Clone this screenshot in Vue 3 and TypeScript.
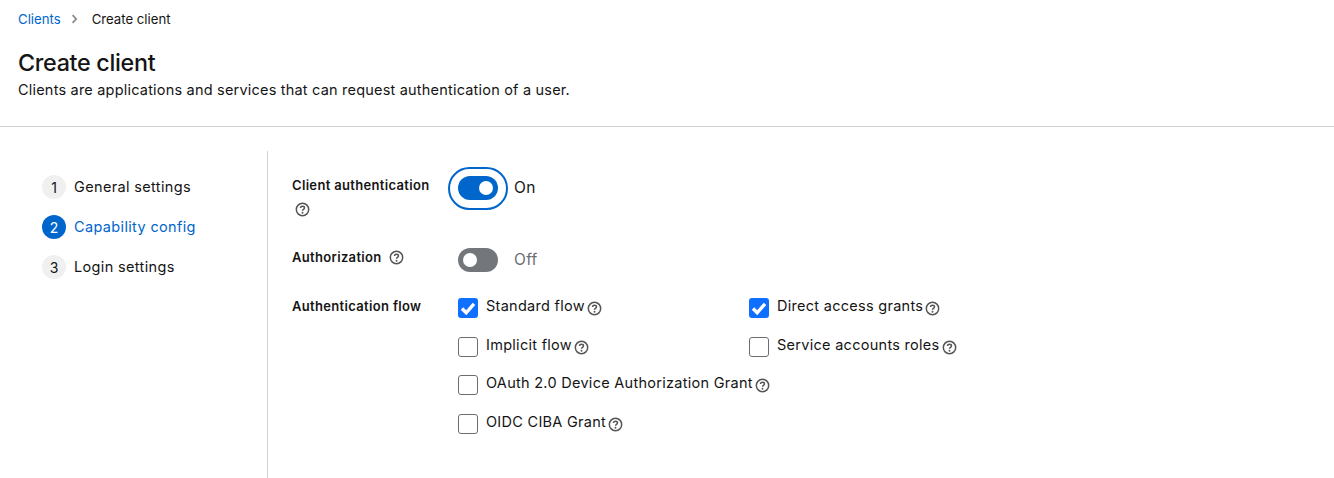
<script setup lang="ts">
const steps = [
  { n: 1, label: 'General settings', active: false },
  { n: 2, label: 'Capability config', active: true },
  { n: 3, label: 'Login settings', active: false },
]
const rows = [
  [{ label: 'Standard flow', on: true }, { label: 'Direct access grants', on: true }],
  [{ label: 'Implicit flow', on: false }, { label: 'Service accounts roles', on: false }],
  [{ label: 'OAuth 2.0 Device Authorization Grant', on: false }],
  [{ label: 'OIDC CIBA Grant', on: false }],
]
</script>

<template>
  <div class="page">
    <header class="head">
      <nav class="crumbs">
        <a class="link">Clients</a>
        <svg class="chev" viewBox="0 0 8 12"><path d="M1.7 1.3 6 6l-4.300 4.700" fill="none" stroke="#8a8d90" stroke-width="2.200"/></svg>
        <span>Create client</span>
      </nav>
      <h1>Create client</h1>
      <p>Clients are applications and services that can request authentication of a user.</p>
    </header>
    <div class="body">
      <ol class="steps">
        <li v-for="s in steps" :key="s.n" class="step" :class="{ active: s.active }">
          <span class="num">{{ s.n }}</span>
          <span class="step-label">{{ s.label }}</span>
        </li>
      </ol>
      <form class="form">
        <div class="row row-auth">
          <div class="lab lab-wrap">
            <b>Client authentication</b>
            <svg class="help help-below" viewBox="0 0 16 16"><circle cx="8" cy="8" r="6.600" fill="none" stroke="#555" stroke-width="1.600"/><path d="M5.900 6.400c0-1.200 1-1.900 2.100-1.900s2.100.7 2.100 1.800c0 1.500-2.100 1.500-2.100 3" fill="none" stroke="#555" stroke-width="1.600"/><circle cx="8" cy="11.400" r="1" fill="#555"/></svg>
          </div>
          <div class="switch-line">
            <span class="focus"><span class="switch on"><i></i></span></span>
            <span class="on-text">On</span>
          </div>
        </div>
        <div class="row row-authz">
          <div class="lab">
            <b>Authorization</b>
            <svg class="help help-side" viewBox="0 0 16 16"><circle cx="8" cy="8" r="6.600" fill="none" stroke="#555" stroke-width="1.600"/><path d="M5.900 6.400c0-1.200 1-1.900 2.100-1.900s2.100.7 2.100 1.800c0 1.500-2.100 1.500-2.100 3" fill="none" stroke="#555" stroke-width="1.600"/><circle cx="8" cy="11.400" r="1" fill="#555"/></svg>
          </div>
          <div class="switch-line plain">
            <span class="switch"><i></i></span>
            <span class="off-text">Off</span>
          </div>
        </div>
        <div class="row row-flow">
          <div class="lab"><b>Authentication flow</b></div>
          <div class="checks">
            <div v-for="(r, i) in rows" :key="i" class="check-row">
              <label v-for="c in r" :key="c.label" class="check">
                <span class="box" :class="{ on: c.on }">
                  <svg v-if="c.on" viewBox="0 0 20 20"><path d="M4 10.500 8.200 14.800 16 5.800" fill="none" stroke="#fff" stroke-width="3.400"/></svg>
                </span>
                <span class="txt">{{ c.label }}</span>
                <svg class="help" viewBox="0 0 16 16"><circle cx="8" cy="8" r="6.600" fill="none" stroke="#555" stroke-width="1.600"/><path d="M5.900 6.400c0-1.200 1-1.900 2.100-1.900s2.100.7 2.100 1.800c0 1.500-2.100 1.500-2.100 3" fill="none" stroke="#555" stroke-width="1.600"/><circle cx="8" cy="11.400" r="1" fill="#555"/></svg>
              </label>
            </div>
          </div>
        </div>
      </form>
    </div>
  </div>
</template>

<style>
html, body { margin: 0; background: #fff; }
</style>

<style scoped>
.page { width: 1334px; height: 478px; overflow: hidden; background: #fff; color: #151515; font-family: "Inter", "Noto Sans", sans-serif; font-size: 14px; }
.head { padding: 10px 18px 0; border-bottom: 1px solid #d2d2d2; width: 1298px; height: 116px; }
.crumbs { display: flex; align-items: center; height: 17px; font-size: 13.200px; }
.link { color: #06c; }
.chev { width: 7px; height: 10px; margin: 0 14px 0 10px; }
h1 { margin: 22px 0 0; font-weight: 500; font-size: 23.300px; line-height: 28px; letter-spacing: -.3px; }
p { margin: 3px 0 0; font-size: 14.500px; line-height: 20px; letter-spacing: .2px; }
.body { display: flex; margin-top: 24px; height: 327px; }
.steps { list-style: none; margin: 0; padding: 24px 0 0 42px; width: 225px; border-right: 1px solid #d2d2d2; }
.step { display: flex; align-items: center; gap: 8px; height: 24px; margin-bottom: 16px; font-size: 14.500px; letter-spacing: .35px; }
.step-label { padding-bottom: 2px; }
.step.active { color: #06c; }
.num { width: 24px; height: 24px; border-radius: 50%; background: #f0f0f0; display: flex; align-items: center; justify-content: center; font-size: 14px; letter-spacing: 0; }
.active .num { background: #06c; color: #fff; }
.form { padding: 13px 0 0 24px; }
.row { display: flex; }
.lab { width: 166px; font-size: 13px; letter-spacing: .33px; }
.lab b { font-weight: 600; }
.row-auth { height: 84px; }
.lab-wrap { display: flex; flex-direction: column; padding-top: 13px; }
.help { width: 15px; height: 15px; flex: none; }
.help-below { margin: 9px 0 0 3px; }
.help-side { margin-left: 7px; vertical-align: -3px; }
.switch-line { display: flex; align-items: center; height: 48px; }
.focus { margin-left: -10px; width: 60px; height: 43px; box-sizing: border-box; border: 2px solid #06c; border-radius: 22px; display: flex; align-items: center; justify-content: center; }
.switch { width: 40px; height: 24px; border-radius: 12px; background: #73777b; display: block; position: relative; }
.switch i { position: absolute; width: 14px; height: 14px; top: 5px; left: 5px; border-radius: 50%; background: #fff; }
.switch.on { background: #06c; }
.switch.on i { left: 21px; }
.on-text { margin: 0 0 2px 6px; font-size: 15.500px; letter-spacing: .3px; }
.off-text { margin: 0 0 2px 16px; font-size: 15.500px; letter-spacing: .3px; color: #6a6e73; }
.row-authz { height: 50px; }
.row-authz .lab { padding-top: 1px; }
.plain { height: 24px; }
.checks { display: flex; flex-direction: column; }
.check-row { display: flex; height: 38.600px; }
.check { display: flex; width: 291px; flex: none; white-space: nowrap; }
.box { width: 20px; height: 20px; box-sizing: border-box; border: 1px solid #6a6e73; border-radius: 3px; margin: 0 8px 0 0; flex: none; }
.box.on { background: #0f6fff; border: 0; }
.box svg { display: block; width: 20px; height: 20px; }
.txt { font-size: 14.500px; line-height: 18px; margin-top: -1px; letter-spacing: .28px; }
.check .help { margin: 3px 0 0 2px; }
</style>
